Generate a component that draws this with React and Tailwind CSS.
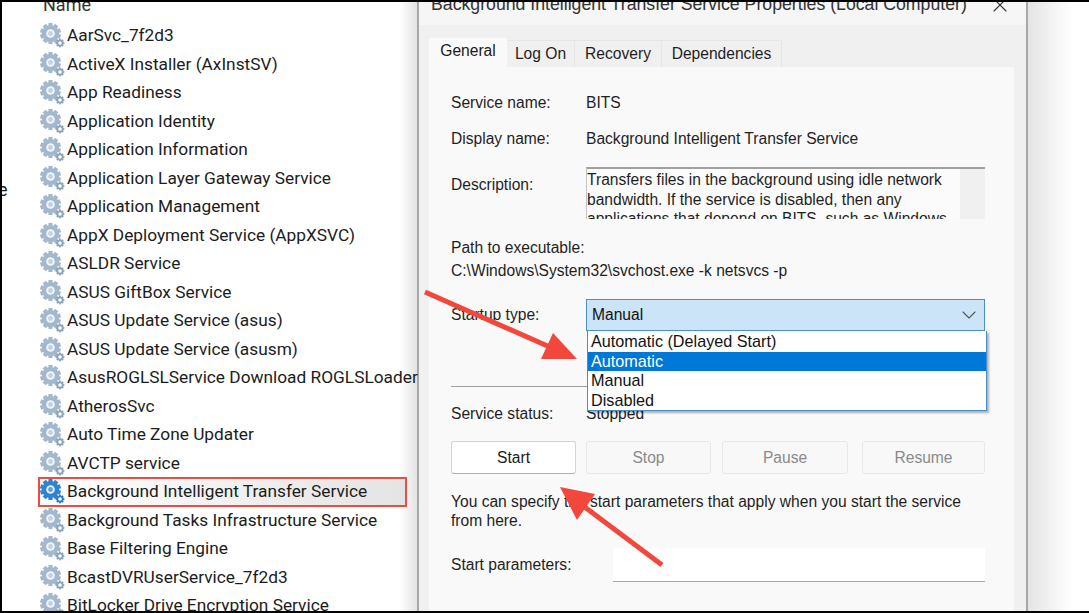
import { ChevronDown, X } from 'lucide-react';

const services = [
  'AarSvc_7f2d3',
  'ActiveX Installer (AxInstSV)',
  'App Readiness',
  'Application Identity',
  'Application Information',
  'Application Layer Gateway Service',
  'Application Management',
  'AppX Deployment Service (AppXSVC)',
  'ASLDR Service',
  'ASUS GiftBox Service',
  'ASUS Update Service (asus)',
  'ASUS Update Service (asusm)',
  'AsusROGLSLService Download ROGLSLoader',
  'AtherosSvc',
  'Auto Time Zone Updater',
  'AVCTP service',
  'Background Intelligent Transfer Service',
  'Background Tasks Infrastructure Service',
  'Base Filtering Engine',
  'BcastDVRUserService_7f2d3',
  'BitLocker Drive Encryption Service',
];

function Cog({ cx, cy, r, teeth, fill, hole }) {
  const bits = [];
  for (let i = 0; i < teeth; i++) {
    const a = (360 / teeth) * i;
    bits.push(
      <rect key={i} x={cx - r * 0.24} y={cy - r * 1.22} width={r * 0.48} height={r * 0.5} fill={fill} transform={`rotate(${a} ${cx} ${cy})`} />
    );
  }
  return (
    <g>
      {bits}
      <circle cx={cx} cy={cy} r={r} fill={fill} />
      <circle cx={cx} cy={cy} r={r * 0.5} fill={hole} />
    </g>
  );
}

function GearIcon({ active }) {
  const big = active ? '#2f84cc' : '#a3b8cc';
  const small = active ? '#2a7cc4' : '#8ca3b8';
  return (
    <svg width="28" height="28" viewBox="0 0 28 28" className="shrink-0">
      <Cog cx={11.5} cy={11.5} r={8.6} teeth={10} fill={big} hole={active ? '#e4f0fa' : '#f2f6fa'} />
      <circle cx={11.5} cy={11.5} r={2.4} fill={active ? '#5aa0dc' : '#c3d2e0'} />
      <Cog cx={21} cy={21} r={3.6} teeth={8} fill={small} hole="#ffffff" />
    </svg>
  );
}

function ServiceRow({ name, active }) {
  return (
    <div className="relative flex h-[28.5px] items-center pl-[39px] whitespace-nowrap">
      {active && (
        <div className="absolute left-[38px] top-[-1px] h-[30px] w-[369px] border-[2px] border-[#ef4b43] bg-gradient-to-r from-white to-[#e4e4e4]" />
      )}
      <div className="relative flex items-center">
        <GearIcon active={active} />
        <span className="text-[17.3px] text-[#1c1c1c]">{name}</span>
      </div>
    </div>
  );
}

function ActionButton({ label, width, enabled }) {
  return (
    <div
      className={`flex h-[33px] items-center justify-center rounded-[3px] ${width} ${
        enabled ? 'border border-[#d4d4d4] border-b-[#b0b0b0] bg-white text-[#1a1a1a]' : 'border border-[#e8e8e8] bg-[#f8f8f8] text-[#8a8a8a]'
      }`}
    >
      {label}
    </div>
  );
}

function Arrow({ shaft, head }) {
  return (
    <g>
      <line x1={shaft[0]} y1={shaft[1]} x2={shaft[2]} y2={shaft[3]} stroke="#f4473b" strokeWidth="5" />
      <polygon points={head} fill="#f4473b" />
    </g>
  );
}

export default function App() {
  return (
    <div className="relative h-[613px] w-[1089px] overflow-hidden bg-black pb-[2px] pl-[2px] pt-[2px] font-['Liberation_Sans',sans-serif]">
      <div className="flex h-full overflow-hidden bg-white">
        {/* services list */}
        <div className="relative w-[398px] shrink-0 font-['Roboto',sans-serif]">
          <span className="absolute -left-[4px] top-[176px] text-[18px] leading-[24px] text-[#1c1c1c]">e</span>
          <div className="-mt-[9px] ml-[41px] text-[18px] leading-[24px] text-[#333]">Name</div>
          <div className="-ml-[2px] mt-[5px] w-[420px]">
            {services.map((name) => (
              <ServiceRow key={name} name={name} active={name.startsWith('Background Intelligent')} />
            ))}
          </div>
        </div>

        {/* left drop shadow */}
        <div className="w-[17px] shrink-0 bg-gradient-to-r from-white to-[#e2e2e2]" />
        <div className="w-[2px] shrink-0 bg-[#a8a8a8]" />

        {/* properties dialog */}
        <div className="relative w-[607px] shrink-0 bg-[#f0f0f0] text-[15.6px] text-[#1f1f1f]">
          <div className="flex h-[23px] items-start justify-between bg-[#f6f6f6] pl-[12px] pr-[14px]">
            <span className="-mt-[10px] whitespace-nowrap text-[17.7px] leading-[24px] text-[#333]">
              Background Intelligent Transfer Service Properties (Local Computer)
            </span>
            <X size={24} strokeWidth={1.1} className="-mt-[9px] text-[#333]" />
          </div>

          {/* tabs */}
          <div className="flex h-[42px] items-end pl-[10px]">
            <div className="flex h-[29px] w-[78px] items-center justify-center bg-[#f9f9f9] pb-[3px] text-[#1a1a1a]">General</div>
            <div className="flex h-[27px] w-[68px] items-center justify-center border-r border-t border-[#e6e6e6] bg-[#f0f0f0]">Log On</div>
            <div className="flex h-[27px] w-[87px] items-center justify-center border-r border-t border-[#e6e6e6] bg-[#f0f0f0]">Recovery</div>
            <div className="flex h-[27px] w-[120px] items-center justify-center border-r border-t border-[#e6e6e6] bg-[#f0f0f0]">Dependencies</div>
          </div>

          {/* general page */}
          <div className="ml-[10px] h-[560px] w-[585px] bg-[#f9f9f9] pl-[22px] pr-[29px]">
            <div className="flex h-[22px] translate-y-[25px] items-center">
              <span className="w-[135px]">Service name:</span>
              <span>BITS</span>
            </div>
            <div className="mt-[14px] flex h-[22px] translate-y-[25px] items-center">
              <span className="w-[135px]">Display name:</span>
              <span>Background Intelligent Transfer Service</span>
            </div>
            <div className="mt-[42px] flex h-[52px]">
              <span className="mt-[6px] w-[135px] shrink-0">Description:</span>
              <div className="flex flex-1 overflow-hidden border-l border-t-2 border-l-[#c4c4c4] border-t-[#a0a0a0] bg-[#fbfbfb]">
                <p className="w-[373px] pt-[1px] leading-[19.5px]">
                  Transfers files in the background using idle network bandwidth. If the service is disabled, then any applications that depend on BITS, such as Windows
                </p>
                <div className="flex-1 bg-[#f0f0f0]" />
              </div>
            </div>
            <div className="mt-[18px] h-[22px] leading-[22px]">Path to executable:</div>
            <div className="mt-[1px] h-[22px] leading-[22px]">C:\Windows\System32\svchost.exe -k netsvcs -p</div>
            <div className="relative mt-[17px] flex h-[32px] items-center">
              <span className="w-[135px] shrink-0">Startup type:</span>
              <div className="flex h-[32px] flex-1 items-center justify-between border border-[#4a90c8] bg-[#cce4f7] pl-[5px] pr-[3px] text-[#111]">
                Manual
                <ChevronDown size={24} strokeWidth={1.1} className="text-[#555]" />
              </div>
              {/* open dropdown */}
              <div className="absolute left-[136px] top-[32px] z-10 w-[400px] border border-[#4a90c8] border-t-0 bg-white pt-[1px] text-[16.2px] leading-[19.5px] text-[#111] shadow-[2px_2px_2px_rgba(0,0,0,0.3)]">
                <div className="pl-[3px]">Automatic (Delayed Start)</div>
                <div className="bg-[#0078d7] pl-[3px] text-white">Automatic</div>
                <div className="pl-[3px]">Manual</div>
                <div className="pl-[3px]">Disabled</div>
              </div>
            </div>
            <div className="mt-[55px] h-px bg-[#a0a0a0]" />
            <div className="mt-[16px] flex h-[22px] items-center">
              <span className="w-[135px]">Service status:</span>
              <span>Stopped</span>
            </div>
            <div className="mt-[16px] flex">
              <ActionButton label="Start" width="w-[125px]" enabled />
              <div className="w-[10px]" />
              <ActionButton label="Stop" width="w-[125px]" />
              <div className="w-[11px]" />
              <ActionButton label="Pause" width="w-[126px]" />
              <div className="w-[14px]" />
              <ActionButton label="Resume" width="w-[123px]" />
            </div>
            <p className="mt-[18px] leading-[19px]">
              You can specify the start parameters that apply when you start the service from here.
            </p>
            <div className="mt-[18px] flex h-[34px] items-center">
              <span className="w-[162px] shrink-0">Start parameters:</span>
              <div className="h-[34px] flex-1 border-b border-b-[#a8a8a8] bg-white" />
            </div>
          </div>
        </div>

        <div className="w-[2px] shrink-0 bg-[#a8a8a8]" />
        {/* right drop shadow */}
        <div className="w-[44px] shrink-0 bg-gradient-to-r from-[#e4e4e4] to-white" />
      </div>

      {/* red annotation arrows */}
      <svg className="absolute left-0 top-0 z-20 h-[613px] w-[1089px]" viewBox="0 0 1089 613">
        <Arrow shaft={[425, 292, 552, 348]} head="553,333 577,359 541,359" />
        <Arrow shaft={[662, 565, 582, 505]} head="560,487 595,494 577,520" />
      </svg>
    </div>
  );
}
